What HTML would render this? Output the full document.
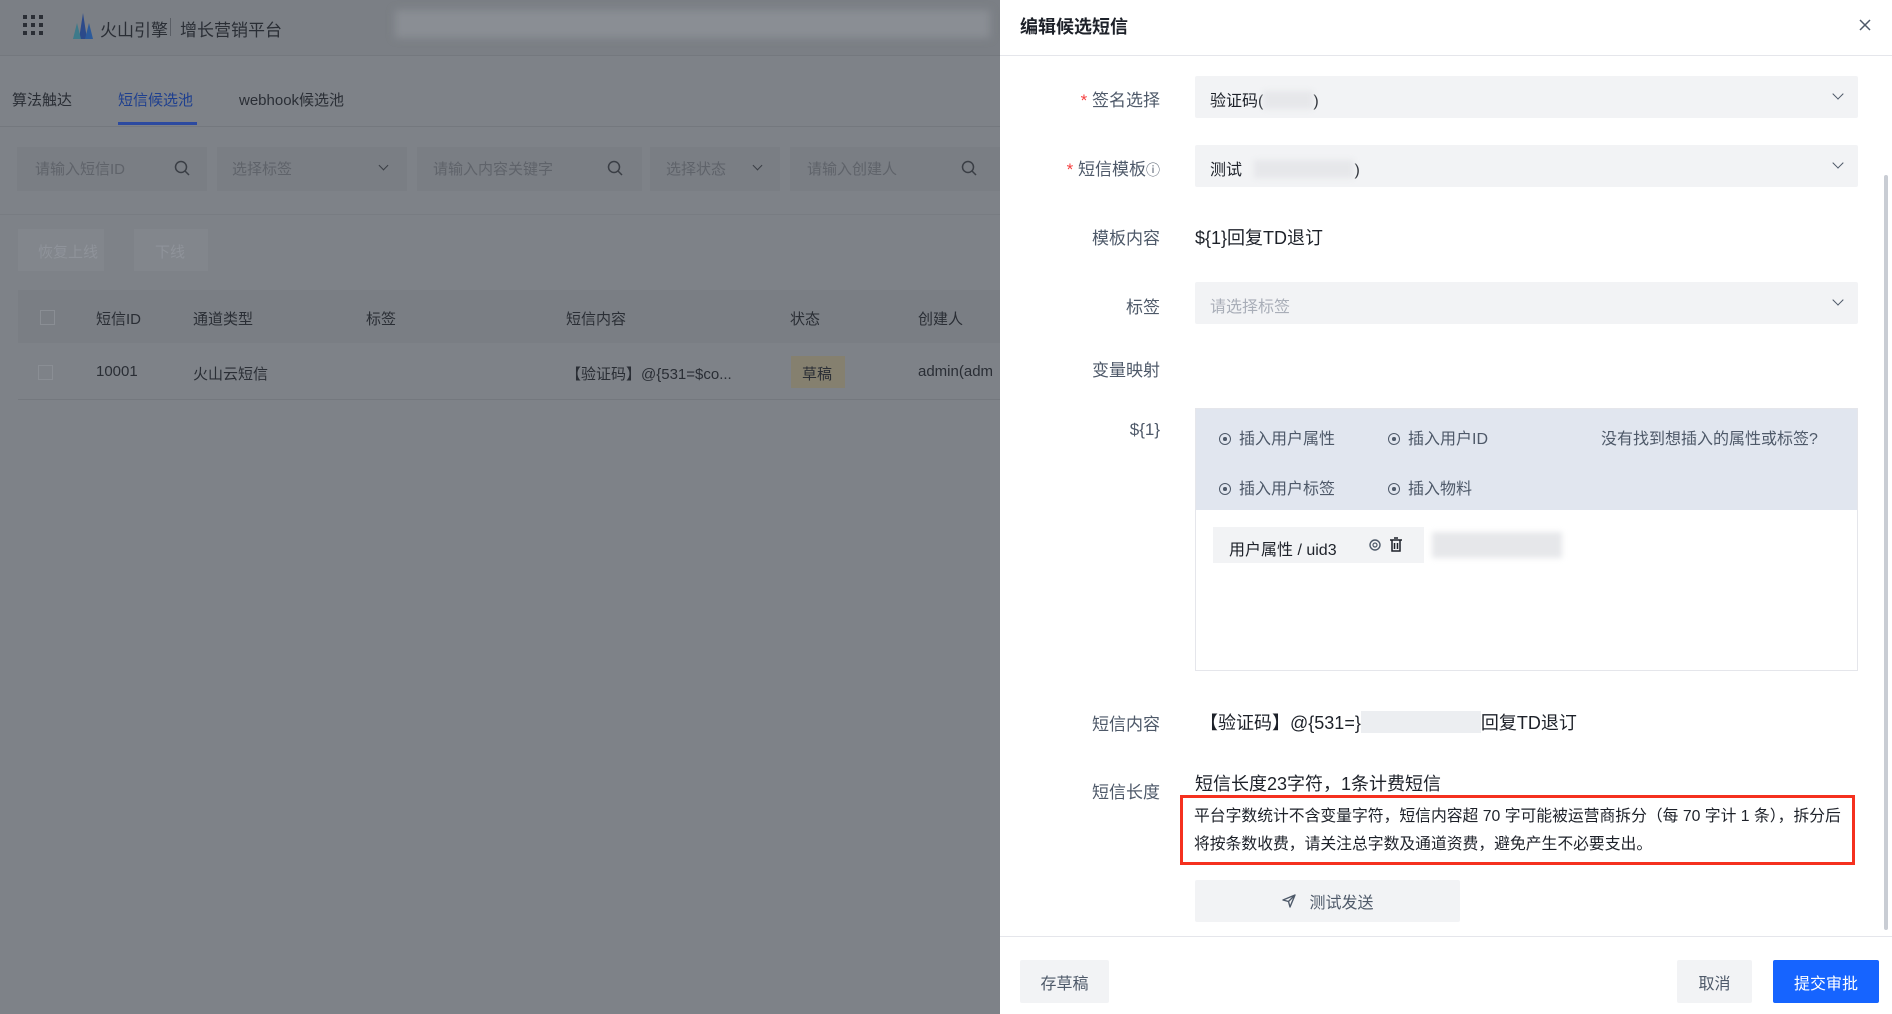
<!DOCTYPE html>
<html><head><meta charset="utf-8"><style>
*{box-sizing:border-box;margin:0;padding:0}
body{width:1892px;height:1014px;overflow:hidden;position:relative;font-family:"Liberation Sans","Noto Sans CJK SC",sans-serif;background:#7d8187;color:#1d2129}
.a{position:absolute}
.left{left:0;top:0;width:1000px;height:1014px;background:#7e8288}
.nav{left:0;top:0;width:1000px;height:56px;background:#7b7f85;border-bottom:1px solid #74787e}
.lt{color:#2a2e35;font-size:15px;white-space:nowrap}
.inp{background:#7a7e84;height:44px;top:147px}
.ph{color:#5f636a;font-size:15px}
.dr{left:1000px;top:0;width:892px;height:1014px;background:#fff}
.lbl{font-size:17px;color:#4e5969;text-align:right;width:160px;left:1000px;white-space:nowrap}
.sel{left:1195px;width:663px;height:42px;background:#f2f3f5;border-radius:2px;font-size:16px;padding:11px 15px;color:#1d2129}
.chev{position:absolute;right:16px;top:14px;width:8px;height:8px;border-right:1.5px solid #4e5969;border-bottom:1.5px solid #4e5969;transform:rotate(45deg)}
.lchev{position:absolute;width:7px;height:7px;border-right:1.5px solid #3a3e45;border-bottom:1.5px solid #3a3e45;transform:rotate(45deg)}
.blur{background:#e6e7ea;filter:blur(3px);display:inline-block}
.ins{font-size:16px;color:#4e5969;white-space:nowrap}
.ci{display:inline-block;width:12px;height:12px;border:1.3px solid #4e5969;border-radius:50%;position:relative;margin-right:8px;vertical-align:-1px}
.ci:after{content:"";position:absolute;left:3px;top:3px;width:3.5px;height:3.5px;background:#4e5969;border-radius:50%}
.btn{background:#f2f3f5;font-size:16px;color:#4e5969;display:flex;align-items:center;justify-content:center;border-radius:2px}
</style></head><body>
<div class="a left"></div>
<div class="a nav"></div>
<div class="a" style="left:23px;top:15px;width:20px;height:20px;display:grid;grid-template-columns:repeat(3,4px);gap:4px">
<i style="background:#2a2e35;width:4px;height:4px"></i><i style="background:#2a2e35;width:4px;height:4px"></i><i style="background:#2a2e35;width:4px;height:4px"></i><i style="background:#2a2e35;width:4px;height:4px"></i><i style="background:#2a2e35;width:4px;height:4px"></i><i style="background:#2a2e35;width:4px;height:4px"></i><i style="background:#2a2e35;width:4px;height:4px"></i><i style="background:#2a2e35;width:4px;height:4px"></i><i style="background:#2a2e35;width:4px;height:4px"></i></div>
<svg class="a" style="left:72px;top:13px" width="22" height="26"><polygon points="11,0 15,26 7,26" fill="#2c4a8a"/><polygon points="5,10 9,26 1,26" fill="#3d7a8a"/><polygon points="17,10 21,26 13,26" fill="#2c5a9a"/></svg>
<div class="a lt" style="left:100px;top:16px;font-size:17px">火山引擎</div>
<div class="a" style="left:170px;top:18px;width:1px;height:18px;background:#5a5e65"></div>
<div class="a lt" style="left:180px;top:16px;font-size:17px">增长营销平台</div>
<div class="a" style="left:395px;top:10px;width:595px;height:28px;background:#8a8e94;filter:blur(4px)"></div>
<div class="a lt" style="left:12px;top:89px">算法触达</div>
<div class="a lt" style="left:118px;top:89px;color:#1e3f8f">短信候选池</div>
<div class="a" style="left:118px;top:122px;width:79px;height:3px;background:#2c4aa0"></div>
<div class="a lt" style="left:239px;top:89px">webhook候选池</div>
<div class="a" style="left:0;top:126px;width:1000px;height:1px;background:#74787e"></div>
<svg width="0" height="0" style="position:absolute"><defs><g id="mg"><circle cx="7" cy="7" r="5.5" fill="none" stroke="#3a3e45" stroke-width="1.5"/><line x1="11" y1="11" x2="15" y2="15" stroke="#3a3e45" stroke-width="1.5"/></g></defs></svg>
<div class="a inp" style="left:17px;width:190px"></div><div class="a ph" style="left:35px;top:158px">请输入短信ID</div><svg class="a" style="left:174px;top:160px" width="16" height="16"><use href="#mg"/></svg>
<div class="a inp" style="left:217px;width:190px"></div><div class="a ph" style="left:232px;top:158px">选择标签</div><i class="lchev" style="left:380px;top:162px"></i>
<div class="a inp" style="left:417px;width:225px"></div><div class="a ph" style="left:433px;top:158px">请输入内容关键字</div><svg class="a" style="left:607px;top:160px" width="16" height="16"><use href="#mg"/></svg>
<div class="a inp" style="left:650px;width:130px"></div><div class="a ph" style="left:666px;top:158px">选择状态</div><i class="lchev" style="left:754px;top:162px"></i>
<div class="a inp" style="left:790px;width:210px"></div><div class="a ph" style="left:807px;top:158px">请输入创建人</div><svg class="a" style="left:961px;top:160px" width="16" height="16"><use href="#mg"/></svg>
<div class="a" style="left:0;top:214px;width:1000px;height:1px;background:#787c82"></div>
<div class="a" style="left:18px;top:229px;width:86px;height:42px;background:#82868c"></div><div class="a ph" style="left:38px;top:241px;color:#8f939a">恢复上线</div>
<div class="a" style="left:134px;top:229px;width:74px;height:42px;background:#82868c"></div><div class="a ph" style="left:155px;top:241px;color:#8f939a">下线</div>
<div class="a" style="left:18px;top:290px;width:982px;height:53px;background:#7a7e84"></div>
<div class="a" style="left:18px;top:343px;width:982px;height:57px;border-bottom:1px solid #74787e"></div>
<div class="a" style="left:40px;top:310px;width:15px;height:15px;border:1px solid #8a8e94"></div>
<div class="a" style="left:38px;top:365px;width:15px;height:15px;border:1px solid #8a8e94"></div>
<div class="a lt" style="left:96px;top:308px">短信ID</div><div class="a lt" style="left:193px;top:308px">通道类型</div><div class="a lt" style="left:366px;top:308px">标签</div><div class="a lt" style="left:566px;top:308px">短信内容</div><div class="a lt" style="left:790px;top:308px">状态</div><div class="a lt" style="left:918px;top:308px">创建人</div>
<div class="a lt" style="left:96px;top:363px">10001</div><div class="a lt" style="left:193px;top:363px">火山云短信</div><div class="a lt" style="left:566px;top:363px">【验证码】@{531=$co...</div>
<div class="a" style="left:791px;top:356px;width:54px;height:32px;background:#85806f"></div><div class="a lt" style="left:802px;top:363px">草稿</div><div class="a lt" style="left:918px;top:363px">admin(adm</div>

<div class="a dr"></div>
<div class="a" style="left:1020px;top:13px;font-size:18px;font-weight:bold">编辑候选短信</div>
<svg class="a" style="left:1859px;top:19px" width="12" height="12"><path d="M1 1L11 11M11 1L1 11" stroke="#4e5969" stroke-width="1.5"/></svg>
<div class="a" style="left:1000px;top:55px;width:892px;height:1px;background:#e5e6eb"></div>
<div class="a" style="left:1884px;top:175px;width:4px;height:755px;background:#c9cdd4;border-radius:2px"></div>

<div class="a lbl" style="top:86px"><span style="color:#f53f3f">* </span>签名选择</div>
<div class="a sel" style="top:76px">验证码(<span class="blur" style="width:50px;height:18px;vertical-align:-3px"></span>)<i class="chev"></i></div>
<div class="a lbl" style="top:155px"><span style="color:#f53f3f">* </span>短信模板<span style="font-size:14px">ⓘ</span></div>
<div class="a sel" style="top:145px">测试 <span class="blur" style="width:100px;height:18px;vertical-align:-3px;margin-left:8px"></span>)<i class="chev"></i></div>
<div class="a lbl" style="top:224px">模板内容</div>
<div class="a" style="left:1195px;top:224px;font-size:18px">${1}回复TD退订</div>
<div class="a lbl" style="top:293px">标签</div>
<div class="a sel" style="top:282px;color:#a9aeb8">请选择标签<i class="chev"></i></div>
<div class="a lbl" style="top:356px">变量映射</div>
<div class="a lbl" style="top:420px">${1}</div>
<div class="a" style="left:1195px;top:408px;width:663px;height:263px;border:1px solid #e5e6eb"></div>
<div class="a" style="left:1196px;top:409px;width:661px;height:101px;background:#e1e6ef"></div>
<div class="a ins" style="left:1219px;top:425px"><i class="ci"></i>插入用户属性</div>
<div class="a ins" style="left:1388px;top:425px"><i class="ci"></i>插入用户ID</div>
<div class="a ins" style="left:1601px;top:425px">没有找到想插入的属性或标签?</div>
<div class="a ins" style="left:1219px;top:475px"><i class="ci"></i>插入用户标签</div>
<div class="a ins" style="left:1388px;top:475px"><i class="ci"></i>插入物料</div>
<div class="a" style="left:1213px;top:527px;width:211px;height:36px;background:#f2f3f5;font-size:16px;padding:9px 16px;white-space:nowrap">用户属性 / uid3</div>
<svg class="a" style="left:1368px;top:537px" width="40" height="16"><circle cx="7" cy="8" r="5" fill="none" stroke="#4e5969" stroke-width="1.4"/><circle cx="7" cy="8" r="2" fill="none" stroke="#4e5969" stroke-width="1.2"/><path d="M22 3h12M24 3v11h8V3M26 1h4M26.5 6v6M29.5 6v6" fill="none" stroke="#1d2129" stroke-width="1.5"/></svg>
<div class="a blur" style="left:1432px;top:532px;width:130px;height:26px"></div>

<div class="a lbl" style="top:710px">短信内容</div>
<div class="a" style="left:1200px;top:709px;font-size:18px;white-space:nowrap">【验证码】@{531=}<span style="display:inline-block;width:120px;height:22px;background:#eceef1;vertical-align:-4px"></span>回复TD退订</div>
<div class="a lbl" style="top:778px">短信长度</div>
<div class="a" style="left:1195px;top:770px;font-size:18px">短信长度23字符，1条计费短信</div>
<div class="a" style="left:1180px;top:795px;width:675px;height:70px;border:3px solid #f5311f"></div>
<div class="a" style="left:1194px;top:803px;width:660px;font-size:15.8px;line-height:28px;color:#1d2129;white-space:nowrap">平台字数统计不含变量字符，短信内容超 70 字可能被运营商拆分（每 70 字计 1 条），拆分后<br>将按条数收费，请关注总字数及通道资费，避免产生不必要支出。</div>
<div class="a btn" style="left:1195px;top:880px;width:265px;height:42px"><svg width="16" height="16" style="margin-right:12px"><path d="M2 7L14 2L9 14L7.5 8.5Z M7.5 8.5L14 2" fill="none" stroke="#4e5969" stroke-width="1.4" stroke-linejoin="round"/></svg>测试发送</div>
<div class="a" style="left:1000px;top:936px;width:892px;height:1px;background:#e5e6eb"></div>
<div class="a btn" style="left:1020px;top:960px;width:89px;height:43px">存草稿</div>
<div class="a btn" style="left:1677px;top:960px;width:75px;height:43px">取消</div>
<div class="a btn" style="left:1773px;top:960px;width:106px;height:43px;background:#1664ff;color:#fff">提交审批</div>
</body></html>
